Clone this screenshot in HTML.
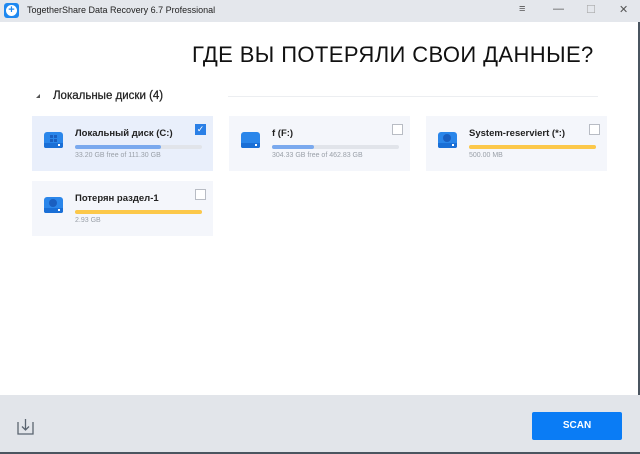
<!DOCTYPE html><html><head><meta charset="utf-8"><style>
*{margin:0;padding:0;box-sizing:border-box}
body{width:640px;height:454px;position:relative;background:#fff;font-family:"Liberation Sans","DejaVu Sans",sans-serif;overflow:hidden}
.tb{position:absolute;left:0;top:0;width:640px;height:22px;background:#e4e7ec}
.tb .t{position:absolute;left:27px;top:5px;font-size:9px;color:#222}
.logo{position:absolute;left:4px;top:3px;width:15px;height:15px;background:#1e88f0;border-radius:3px}
.logo:after{content:"+";position:absolute;left:2px;top:2px;width:11px;height:11px;border-radius:50%;background:#fff;color:#1e88f0;font-size:11px;font-weight:bold;line-height:11px;text-align:center}
.ctl{position:absolute;top:3px;font-size:11px;color:#555}
h1{position:absolute;left:192px;top:42px;font-size:22px;font-weight:normal;color:#111;letter-spacing:0.4px}
.sec{position:absolute;left:53px;top:90px;font-size:11.5px;color:#222;-webkit-text-stroke:0.25px #222}
.tri{position:absolute;left:36px;top:94px;width:0;height:0;border-left:4px solid transparent;border-bottom:4px solid #555}
.line{position:absolute;left:228px;top:96px;width:370px;height:1px;background:#eceef1}
.card{position:absolute;width:181px;height:55px;background:#f4f6fb}
.card.sel{background:#e9effb}
.card .n{position:absolute;left:43px;top:12px;font-size:9.5px;font-weight:bold;color:#222}
.card .bar{position:absolute;left:43px;top:29px;width:127px;height:4px;border-radius:2px;background:#e1e4ea}
.card .bar i{display:block;height:4px;border-radius:2px}
.card .s{position:absolute;left:43px;top:36px;font-size:7px;color:#9aa0a8}
.card .cb{position:absolute;right:7px;top:8px;width:11px;height:11px;border:1px solid #b8bcc4;background:#fff}
.card .cb.on{background:#2a7fe6;border-color:#2a7fe6;color:#fff;font-size:9px;line-height:9px;text-align:center}
.drv{position:absolute;left:12px;top:16px;width:19px;height:16px;background:#2a86ea;border-radius:3px 3px 2px 2px}
.drv:before{content:"";position:absolute;left:0;top:11px;width:19px;height:5px;background:#1a6fd6;border-radius:0 0 2px 2px}
.drv:after{content:"";position:absolute;left:14px;top:12px;width:2px;height:2px;background:#fff}
.drv b{position:absolute;left:5px;top:2px;width:8px;height:8px;border-radius:50%;background:#1a5fc0}
.foot{position:absolute;left:0;top:395px;width:640px;height:59px;background:#e2e5ea;border-bottom:2px solid #4a5560}
.rb{position:absolute;right:0;top:22px;width:2px;height:432px;background:#4a5560}
.scan{position:absolute;left:532px;top:412px;width:90px;height:28px;background:#0a7cf5;border-radius:2px;color:#fff;font-size:10px;font-weight:bold;text-align:center;line-height:28px}
</style></head><body>
<div class="tb"><div class="logo"></div><div class="t">TogetherShare Data Recovery 6.7 Professional</div>
<div class="ctl" style="left:519px">≡</div><div class="ctl" style="left:553px">—</div><div class="ctl" style="left:586px;color:#aaa">☐</div><div class="ctl" style="left:619px">✕</div></div>
<div class="rb"></div>
<h1>ГДЕ ВЫ ПОТЕРЯЛИ СВОИ ДАННЫЕ?</h1>
<div class="tri"></div><div class="sec">Локальные диски (4)</div><div class="line"></div>
<div class="card sel" style="left:32px;top:116px"><div class="drv"><b style="border-radius:0;width:7px;height:7px;left:6px;top:3px;background:linear-gradient(#1a5fc0,#1a5fc0) 0 0/3px 3px no-repeat,linear-gradient(#1a5fc0,#1a5fc0) 4px 0/3px 3px no-repeat,linear-gradient(#1a5fc0,#1a5fc0) 0 4px/3px 3px no-repeat,linear-gradient(#1a5fc0,#1a5fc0) 4px 4px/3px 3px no-repeat"></b></div><div class="n">Локальный диск (C:)</div><div class="bar"><i style="width:86px;background:#7aa9ee"></i></div><div class="s">33.20 GB free of 111.30 GB</div><div class="cb on">✓</div></div>
<div class="card" style="left:229px;top:116px"><div class="drv"></div><div class="n">f (F:)</div><div class="bar"><i style="width:42px;background:#7aa9ee"></i></div><div class="s">304.33 GB free of 462.83 GB</div><div class="cb"></div></div>
<div class="card" style="left:426px;top:116px"><div class="drv"><b></b></div><div class="n">System-reserviert (*:)</div><div class="bar"><i style="width:127px;background:#fcc84a"></i></div><div class="s">500.00 MB</div><div class="cb"></div></div>
<div class="card" style="left:32px;top:181px"><div class="drv"><b></b></div><div class="n">Потерян раздел-1</div><div class="bar"><i style="width:127px;background:#fcc84a"></i></div><div class="s">2.93 GB</div><div class="cb"></div></div>
<div class="foot"></div>
<svg style="position:absolute;left:17px;top:418px" width="18" height="17" viewBox="0 0 18 17" fill="none" stroke="#5a6470" stroke-width="1.3"><path d="M1 4v12h15V4M8.5 1v11M5 8.5l3.5 3.5 3.5-3.5"/></svg>
<div class="scan">SCAN</div>
</body></html>
